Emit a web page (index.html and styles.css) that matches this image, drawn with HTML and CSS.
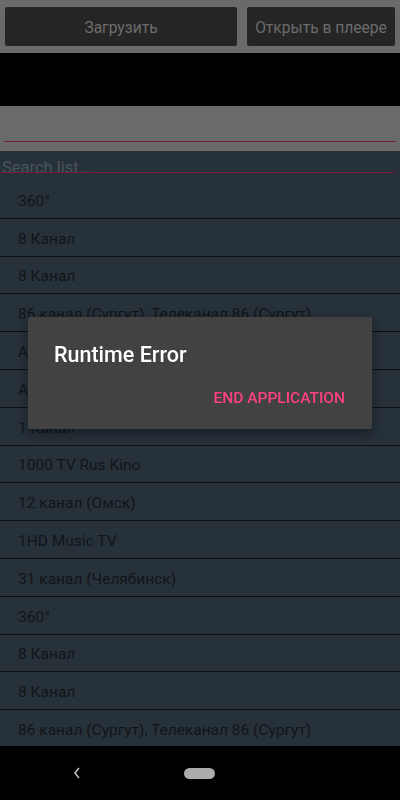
FILE: index.html
```html
<!DOCTYPE html>
<html lang="ru">
<head>
<meta charset="utf-8">
<link rel="stylesheet" href="styles.css">
</head>
<body>
<div class="screen">
  <div class="toolbar">
    <div class="btn btn-load">Загрузить</div>
    <div class="btn btn-open">Открыть в плеере</div>
  </div>
  <div class="blank"></div>
  <div class="inputbar"><div class="field"></div></div>
  <div class="list">
    <div class="search"><span class="placeholder">Search list...</span></div>
    <div class="item">360°</div>
    <div class="item">8 Канал</div>
    <div class="item">8 Канал</div>
    <div class="item">86 канал (Сургут), Телеканал 86 (Сургут)</div>
    <div class="item">A</div>
    <div class="item">A</div>
    <div class="item">1 Канал</div>
    <div class="item">1000 TV Rus Kino</div>
    <div class="item">12 канал (Омск)</div>
    <div class="item">1HD Music TV</div>
    <div class="item">31 канал (Челябинск)</div>
    <div class="item">360°</div>
    <div class="item">8 Канал</div>
    <div class="item">8 Канал</div>
    <div class="item">86 канал (Сургут), Телеканал 86 (Сургут)</div>
  </div>
  <div class="navbar">
    <div class="nav-back">
      <svg width="10" height="14" viewBox="0 0 10 14"><path d="M7 2 L3 7 L7 12" fill="none" stroke="#bdbdbd" stroke-width="1.6"/></svg>
    </div>
    <div class="nav-home"></div>
    <div class="nav-spacer"></div>
  </div>
</div>
<div class="dialog">
  <div class="dialog-title">Runtime Error</div>
  <div class="dialog-actions"><span class="dialog-btn">END APPLICATION</span></div>
</div>
</body>
</html>
```
FILE: styles.css
```css
* { box-sizing: border-box; }
html, body { margin: 0; padding: 0; background: #000; }
body { font-family: Roboto, "Noto Sans", sans-serif; width: 400px; height: 800px; overflow: hidden; }
.screen { display: flex; flex-direction: column; height: 800px; }
.toolbar { height: 53px; background: #6a6a6a; display: flex; gap: 10px; padding: 7px 5px 0 5px; }
.btn { height: 39px; background: #252525; border-radius: 2px; color: #6c6c6c; font-size: 15.6px; display: flex; align-items: center; justify-content: center; padding-top: 2px; }
.btn-load { width: 232px; }
.btn-open { width: 148px; }
.blank { height: 53px; background: #000; }
.inputbar { height: 45px; background: #6a6a6a; padding: 0 4px; }
.field { height: 36px; border-bottom: 1px solid #761a3e; }
.list { flex: 1; background: #27313a; overflow: hidden; }
.search { height: 30px; position: relative; padding: 7px 0 0 2px; }
.search::after { content: ""; position: absolute; left: 0; right: 4px; top: 21px; height: 1px; background: #761a3e; }
.placeholder { font-size: 16.5px; color: #4b545b; line-height: 20px; display: block; }
.item { height: 37.8px; border-bottom: 1px solid #0f1215; color: #121518; font-size: 15.5px; padding: 3px 0 0 18px; display: flex; align-items: center; white-space: nowrap; }
.navbar { height: 54px; background: #000; display: flex; align-items: center; }
.nav-back { width: 154px; display: flex; justify-content: flex-end; padding-right: 72px; }
.nav-home { width: 31px; height: 11px; border-radius: 6px; background: #ababab; margin-left: 30px; }
.nav-spacer { flex: 1; }
.dialog { position: fixed; left: 28px; top: 317px; width: 344px; height: 112px; background: #424242; border-radius: 2px; box-shadow: 0 4px 12px rgba(0,0,0,0.4); padding: 25px 27px 0 26px; }
.dialog-title { color: #fff; font-size: 21.5px; font-weight: 500; line-height: 26px; }
.dialog-actions { display: flex; justify-content: flex-end; margin-top: 21px; }
.dialog-btn { color: #ff4081; font-size: 15.5px; font-weight: 500; line-height: 18px; }
```
